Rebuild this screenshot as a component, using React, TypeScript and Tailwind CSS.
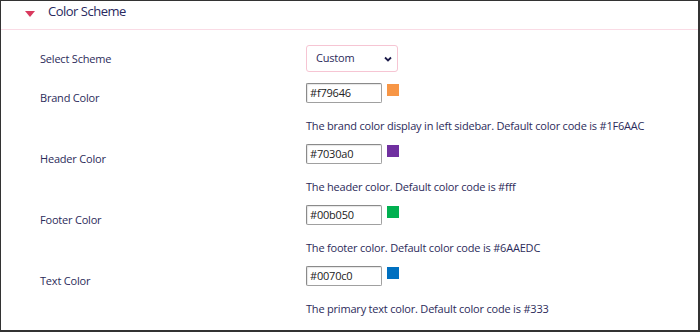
import React from "react";

const rows = [
  { label: "Brand Color", value: "#f79646", color: "bg-[#f79646]", help: "The brand color display in left sidebar. Default color code is #1F6AAC" },
  { label: "Header Color", value: "#7030a0", color: "bg-[#7030a0]", help: "The header color. Default color code is #fff" },
  { label: "Footer Color", value: "#00b050", color: "bg-[#00b050]", help: "The footer color. Default color code is #6AAEDC" },
  { label: "Text Color", value: "#0070c0", color: "bg-[#0070c0]", help: "The primary text color. Default color code is #333" },
];

export default function App() {
  return (
    <div
      className="w-[700px] h-[332px] bg-white border-t border-l border-r-2 border-b-2 border-[#333333] text-[#2c2b5a] overflow-hidden"
      style={{ fontFamily: '"Open Sans", "Noto Sans", sans-serif' }}
    >
      <div className="h-[29px] flex items-start border-b border-[#fadbe5]">
        <svg width="10" height="6" viewBox="0 0 10 6" className="ml-[24px] mt-[10px]">
          <polygon points="0,0 10,0 5,6" fill="#d93a5e" />
        </svg>
        <span className="ml-[13px] mt-[1px] text-[13px] leading-[18px] tracking-[-0.5px] text-[#2a2960]">Color Scheme</span>
      </div>
      <div className="pl-[39px] pt-[15px] text-[11px] tracking-[-0.2px]">
        <div className="flex items-center h-[27px]">
          <div className="w-[266px] leading-[17px]">Select Scheme</div>
          <div className="w-[92px] h-[27px] border border-[#f6c5d3] rounded-[3px] flex items-center justify-between pl-[9px] pr-[5px]">
            <span className="text-[#2c2b5a]">Custom</span>
            <svg width="8" height="6" viewBox="0 0 8 6">
              <path d="M1 1.5 L4 4.5 L7 1.5" stroke="#1d1c4a" strokeWidth="1.8" fill="none" />
            </svg>
          </div>
        </div>
        {rows.map((r, i) => (
          <div key={i} className="flex" style={{ marginTop: i === 0 ? 11 : 10 }}>
            <div className="w-[266px] pt-[6px] leading-[17px]">{r.label}</div>
            <div className="flex flex-col">
              <div className="flex items-start">
                <div className="w-[76px] h-[20px] border border-[#a0a0a0] border-t-[#8a8a8a] border-l-[#8a8a8a] rounded-[2px] flex items-center pl-[3px] text-[#222222] shadow-[inset_1px_1px_1px_rgba(0,0,0,0.1)]">
                  {r.value}
                </div>
                <div className={`w-[12px] h-[12px] ml-[5px] mt-[1px] ${r.color}`} />
              </div>
              <div className="mt-[14px] leading-[17px]">{r.help}</div>
            </div>
          </div>
        ))}
      </div>
    </div>
  );
}
